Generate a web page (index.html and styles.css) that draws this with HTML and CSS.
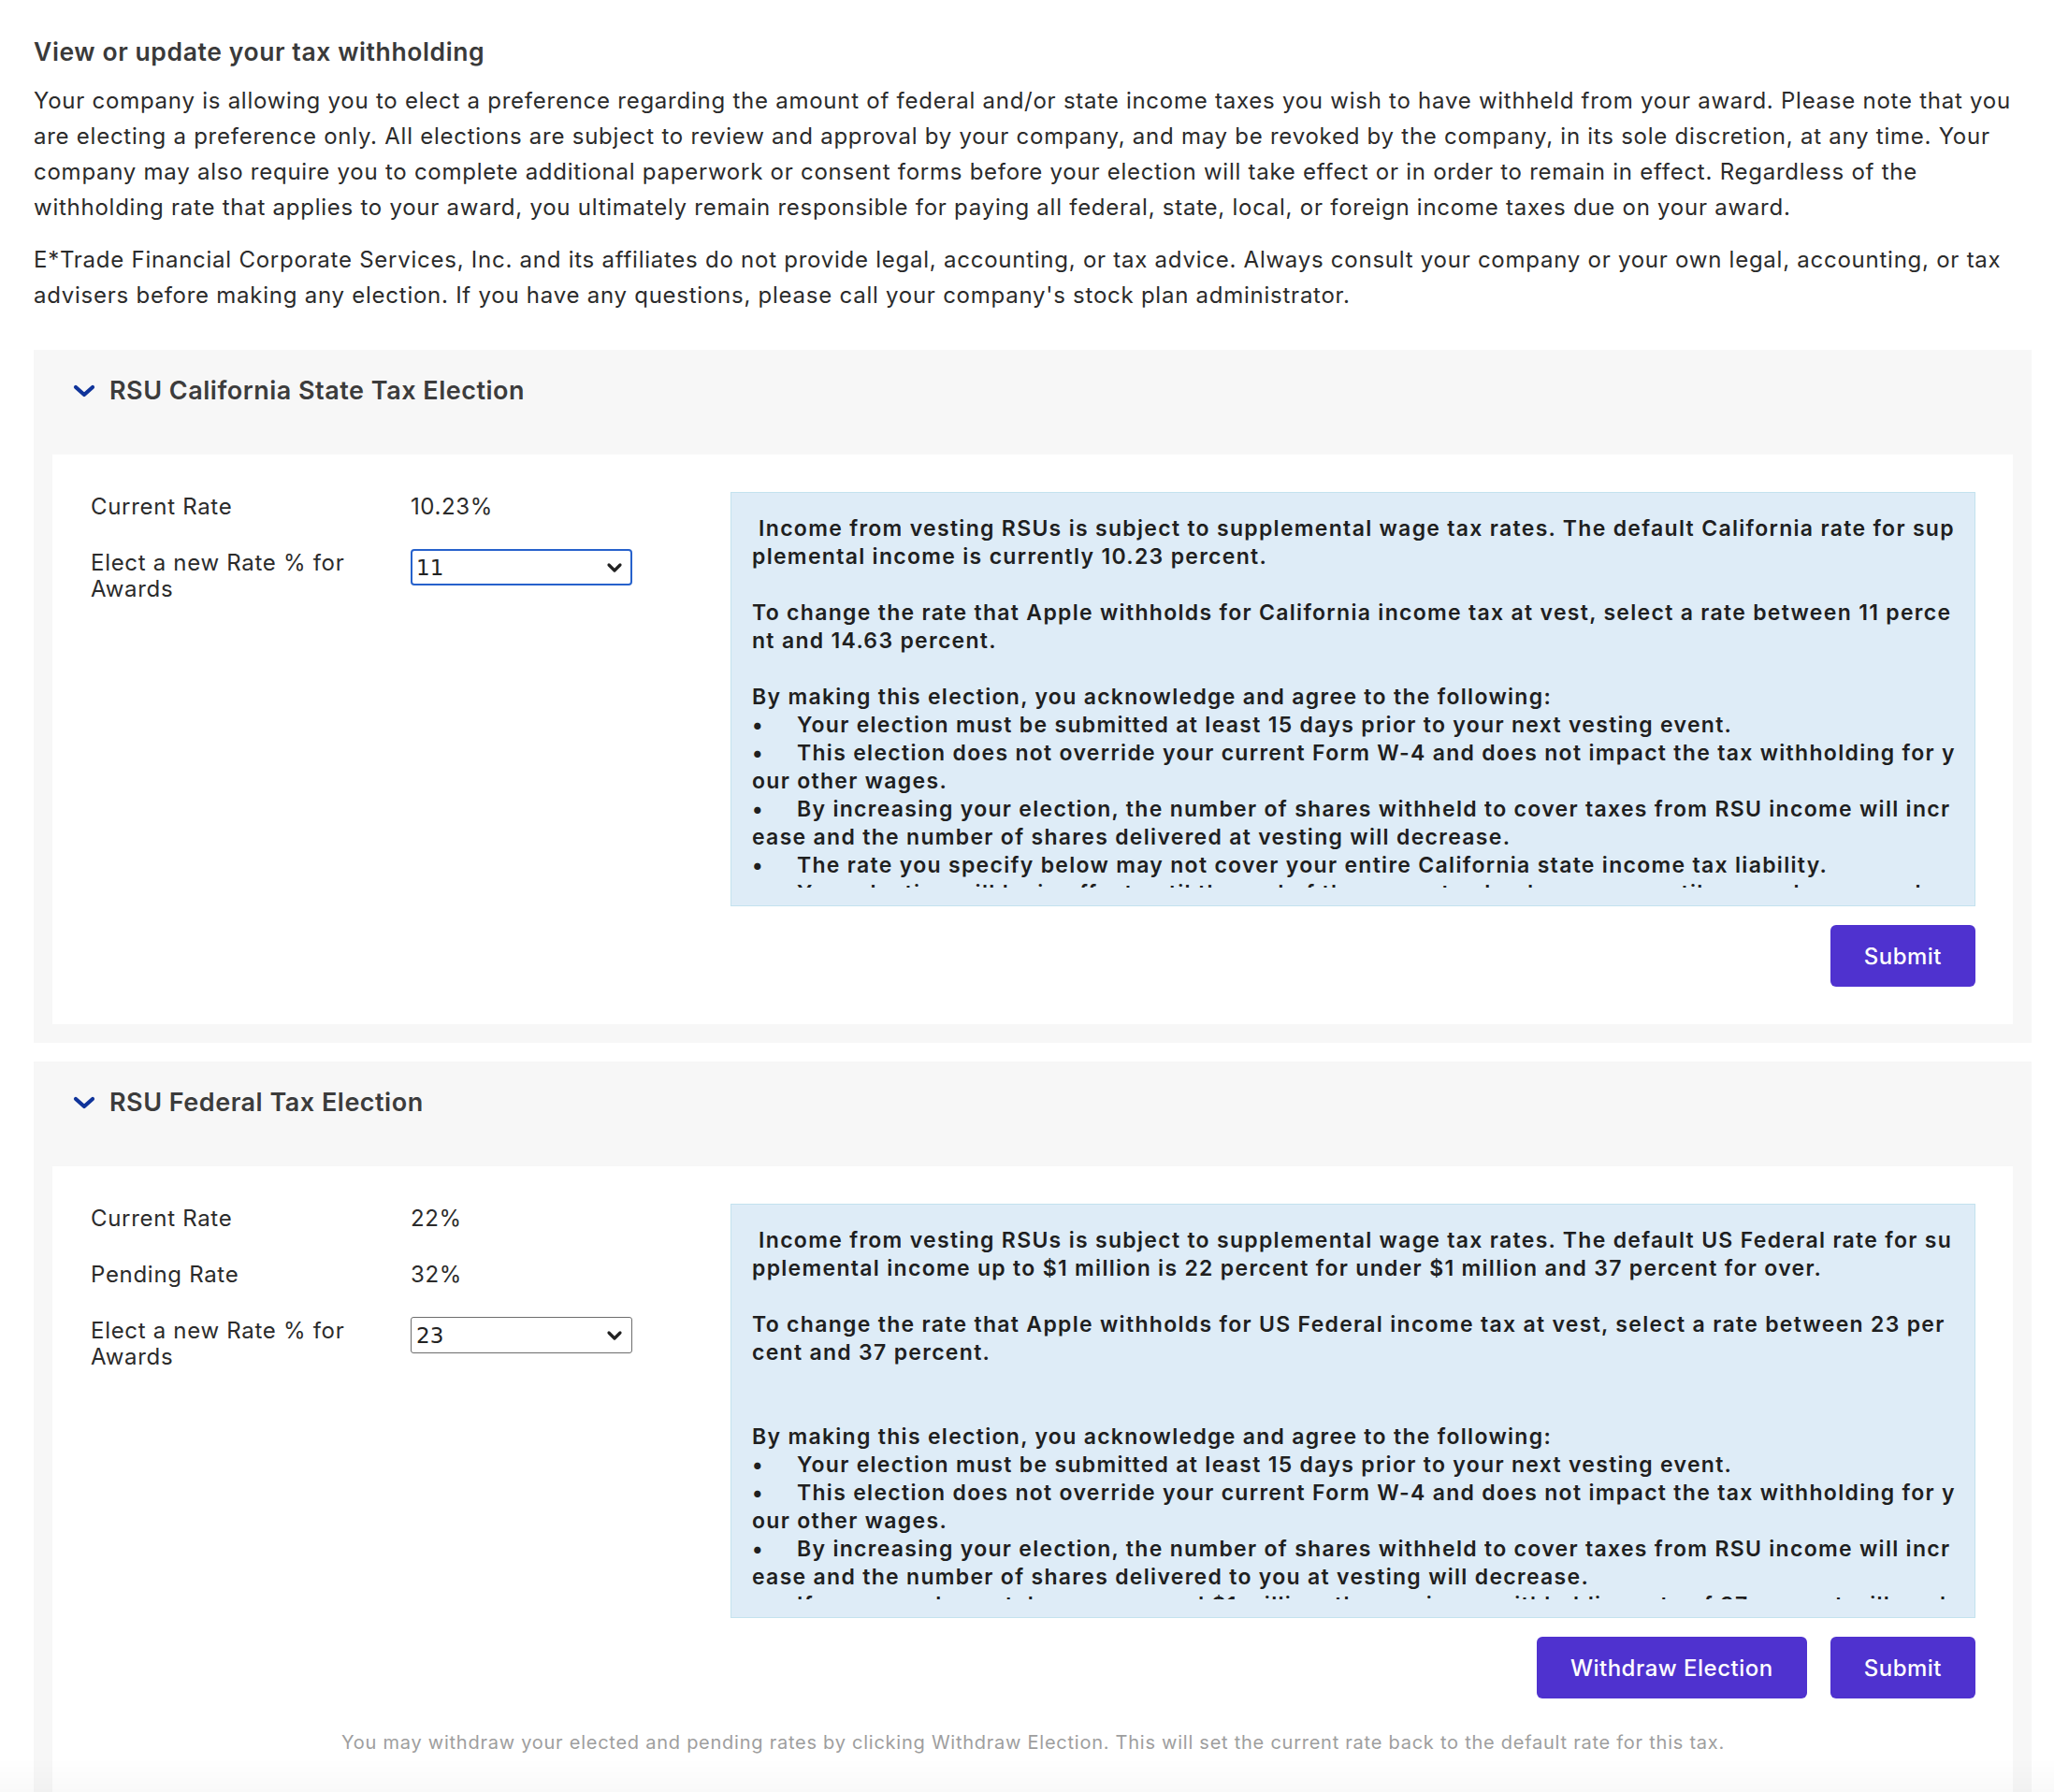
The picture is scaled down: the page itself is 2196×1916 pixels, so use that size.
FILE: index.html
```html
<!DOCTYPE html>
<html lang="en">
<head>
<meta charset="utf-8">
<title>View or update your tax withholding</title>
<link rel="stylesheet" href="styles.css">
</head>
<body>
<div class="page">
  <h1 class="title">View or update your tax withholding</h1>
  <p class="intro">Your company is allowing you to elect a preference regarding the amount of federal and/or state income taxes you wish to have withheld from your award. Please note that you are electing a preference only. All elections are subject to review and approval by your company, and may be revoked by the company, in its sole discretion, at any time. Your company may also require you to complete additional paperwork or consent forms before your election will take effect or in order to remain in effect. Regardless of the withholding rate that applies to your award, you ultimately remain responsible for paying all federal, state, local, or foreign income taxes due on your award.</p>
  <p class="intro">E*Trade Financial Corporate Services, Inc. and its affiliates do not provide legal, accounting, or tax advice. Always consult your company or your own legal, accounting, or tax advisers before making any election. If you have any questions, please call your company's stock plan administrator.</p>

  <section class="panel">
    <div class="panel-head">
      <svg class="chev" width="24" height="14" viewBox="0 0 24 14"><path d="M3 3 L12 11 L21 3" fill="none" stroke="#10349a" stroke-width="4.2" stroke-linecap="round" stroke-linejoin="round"/></svg>
      <span class="panel-title">RSU California State Tax Election</span>
    </div>
    <div class="panel-body">
      <div class="body-row">
        <div class="fields">
          <div class="field"><div class="label">Current Rate</div><div class="value">10.23%</div></div>
          <div class="field"><div class="label">Elect a new Rate % for Awards</div><div class="value select-wrap"><select class="rate focused"><option>11</option></select><svg class="sel-arrow" width="18" height="12" viewBox="0 0 18 12"><path d="M3 3 L9 9 L15 3" fill="none" stroke="#222" stroke-width="3.2" stroke-linecap="round" stroke-linejoin="round"/></svg></div></div>
        </div>
        <div class="info"><div class="info-scroll">&#32;Income from vesting RSUs is subject to supplemental wage tax rates. The default California rate for supplemental income is currently 10.23 percent.

To change the rate that Apple withholds for California income tax at vest, select a rate between 11 percent and 14.63 percent.

By making this election, you acknowledge and agree to the following:
•	Your election must be submitted at least 15 days prior to your next vesting event.
•	This election does not override your current Form W-4 and does not impact the tax withholding for your other wages.
•	By increasing your election, the number of shares withheld to cover taxes from RSU income will increase and the number of shares delivered at vesting will decrease.
•	The rate you specify below may not cover your entire California state income tax liability.
•	Your election will be in effect until the end of the current calendar year or until you make a new election.</div></div>
      </div>
      <div class="actions">
        <button class="btn">Submit</button>
      </div>
    </div>
  </section>

  <section class="panel">
    <div class="panel-head">
      <svg class="chev" width="24" height="14" viewBox="0 0 24 14"><path d="M3 3 L12 11 L21 3" fill="none" stroke="#10349a" stroke-width="4.2" stroke-linecap="round" stroke-linejoin="round"/></svg>
      <span class="panel-title">RSU Federal Tax Election</span>
    </div>
    <div class="panel-body">
      <div class="body-row">
        <div class="fields">
          <div class="field"><div class="label">Current Rate</div><div class="value">22%</div></div>
          <div class="field"><div class="label">Pending Rate</div><div class="value">32%</div></div>
          <div class="field"><div class="label">Elect a new Rate % for Awards</div><div class="value select-wrap"><select class="rate"><option>23</option></select><svg class="sel-arrow" width="18" height="12" viewBox="0 0 18 12"><path d="M3 3 L9 9 L15 3" fill="none" stroke="#222" stroke-width="3.2" stroke-linecap="round" stroke-linejoin="round"/></svg></div></div>
        </div>
        <div class="info"><div class="info-scroll">&#32;Income from vesting RSUs is subject to supplemental wage tax rates. The default US Federal rate for supplemental income up to $1 million is 22 percent for under $1 million and 37 percent for over.

To change the rate that Apple withholds for US Federal income tax at vest, select a rate between 23 percent and 37 percent.


By making this election, you acknowledge and agree to the following:
•	Your election must be submitted at least 15 days prior to your next vesting event.
•	This election does not override your current Form W-4 and does not impact the tax withholding for your other wages.
•	By increasing your election, the number of shares withheld to cover taxes from RSU income will increase and the number of shares delivered to you at vesting will decrease.
•	If your supplemental wages exceed $1 million, the maximum withholding rate of 37 percent will apply.</div></div>
      </div>
      <div class="actions">
        <button class="btn">Withdraw Election</button>
        <button class="btn">Submit</button>
      </div>
      <p class="note">You may withdraw your elected and pending rates by clicking Withdraw Election. This will set the current rate back to the default rate for this tax.</p>
    </div>
  </section>
</div>
<div class="fade"></div>
</body>
</html>
```
FILE: styles.css
```css
html, body {
  margin: 0;
  padding: 0;
  background: #ffffff;
}

body {
  font-family: Inter, "Open Sans", "Liberation Sans", sans-serif;
  color: #2b2b2b;
}

.page {
  padding: 38px 24px 0 36px;
}

.title {
  margin: 0;
  font-size: 26.5px;
  line-height: 34px;
  font-weight: 600;
  letter-spacing: 0.6px;
  color: #3a3a3a;
}

.intro {
  margin: 17px 0 0;
  font-size: 24px;
  line-height: 38px;
  letter-spacing: 0.75px;
  color: #2b2b2b;
}

.intro + .intro {
  margin-top: 18px;
}

.panel {
  margin-top: 39px;
  background: #f7f7f7;
  padding: 0 20px 20px;
}

.panel + .panel {
  margin-top: 20px;
}

.panel-head {
  display: flex;
  align-items: center;
  gap: 15px;
  padding: 28px 0 52px 22px;
  height: 32px;
}

.chev {
  display: block;
}

.panel-title {
  font-size: 27px;
  line-height: 32px;
  font-weight: 600;
  letter-spacing: 0.5px;
  color: #3c3c3c;
}

.panel-body {
  background: #ffffff;
  padding: 40px 40px 40px 41px;
}

.body-row {
  display: flex;
}

.fields {
  width: 684px;
  flex: none;
  padding-top: 2px;
  display: flex;
  flex-direction: column;
  gap: 32px;
}

.field {
  display: flex;
  align-items: flex-start;
}

.label {
  width: 300px;
  margin-right: 42px;
  font-size: 24px;
  line-height: 28px;
  letter-spacing: 0.7px;
  color: #2b2b2b;
}

.value {
  font-size: 24px;
  line-height: 28px;
  letter-spacing: 0.6px;
  color: #2b2b2b;
}

.select-wrap {
  position: relative;
}

.rate {
  display: block;
  margin-top: -1px;
  width: 237px;
  height: 39px;
  box-sizing: border-box;
  appearance: none;
  -webkit-appearance: none;
  font-family: "DejaVu Sans", sans-serif;
  font-size: 23px;
  color: #222;
  background: #fff;
  border: 1px solid #6d6d6d;
  border-radius: 3px;
  padding: 0 5px;
}

.rate.focused {
  border: 2px solid #2762cc;
  border-radius: 4px;
  padding: 0 4px;
}

.sel-arrow {
  position: absolute;
  right: 10px;
  top: 13px;
  pointer-events: none;
}

.info {
  flex: 1;
  height: 443px;
  box-sizing: border-box;
  background: #deecf7;
  border: 1px solid #c3e2ee;
  padding: 23px 20px 19px 22px;
}

.info-scroll {
  height: 399px;
  overflow: hidden;
  font-size: 23px;
  line-height: 30px;
  font-weight: 600;
  letter-spacing: 1.3px;
  color: #1f1f1f;
  white-space: pre-wrap;
  word-break: break-all;
  tab-size: 48px;
}

.actions {
  display: flex;
  justify-content: flex-end;
  gap: 25px;
  margin-top: 20px;
}

.btn {
  height: 66px;
  padding: 0 36px;
  border: none;
  border-radius: 6px;
  background: #4f32cf;
  color: #ffffff;
  font-family: Inter, "Open Sans", "Liberation Sans", sans-serif;
  font-size: 24px;
  font-weight: 500;
  letter-spacing: 0.5px;
}

.note {
  margin: 34px 0 0;
  text-align: center;
  font-size: 20px;
  line-height: 26px;
  letter-spacing: 0.75px;
  color: #9e9e9e;
}

.fade {
  position: fixed;
  left: 0;
  right: 0;
  bottom: 0;
  height: 36px;
  background: linear-gradient(rgba(0,0,0,0), rgba(0,0,0,0.025));
  pointer-events: none;
}
```
